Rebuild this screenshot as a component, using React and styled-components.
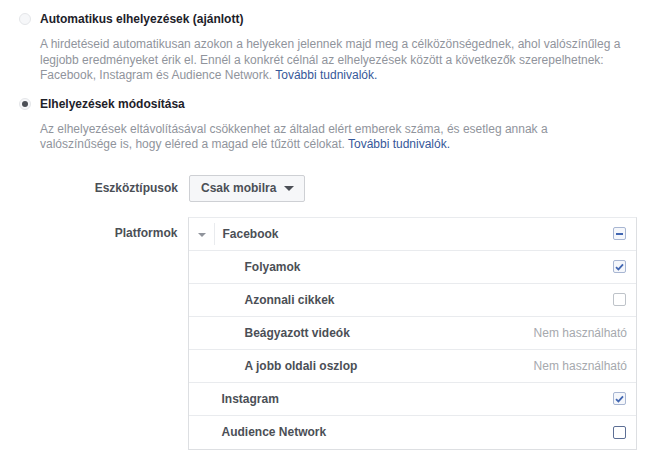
import styled, { createGlobalStyle } from 'styled-components'

const GlobalStyle = createGlobalStyle`
    body {
        margin: 0;
        background: #fff;
        font-family: "Liberation Sans", Arial, sans-serif;
        font-size: 12px;
        color: #1d2129;
    }
`

const App = () => {
    return (
        <Page>
            <GlobalStyle />

            <Option>
                <OptionHead>
                    <Radio />
                    <OptionTitle>Automatikus elhelyezések (ajánlott)</OptionTitle>
                </OptionHead>
                <Description>
                    A hirdetéseid automatikusan azokon a helyeken jelennek majd meg a célközönségednek, ahol valószínűleg a<br />
                    legjobb eredményeket érik el. Ennél a konkrét célnál az elhelyezések között a következők szerepelhetnek:<br />
                    Facebook, Instagram és Audience Network. <Link>További tudnivalók.</Link>
                </Description>
            </Option>

            <Option>
                <OptionHead>
                    <Radio checked />
                    <OptionTitle>Elhelyezések módosítása</OptionTitle>
                </OptionHead>
                <Description>
                    Az elhelyezések eltávolításával csökkenhet az általad elért emberek száma, és esetleg annak a<br />
                    valószínűsége is, hogy eléred a magad elé tűzött célokat. <Link>További tudnivalók.</Link>
                </Description>
            </Option>

            <FieldRow>
                <FieldLabel>Eszköztípusok</FieldLabel>
                <Dropdown>
                    Csak mobilra
                    <Caret />
                </Dropdown>
            </FieldRow>

            <FieldRow top>
                <FieldLabel tall>Platformok</FieldLabel>
                <Table>
                    <Row>
                        <Toggle>
                            <Caret light />
                        </Toggle>
                        <RowLabel>Facebook</RowLabel>
                        <Checkbox state="mixed" />
                    </Row>
                    <Row>
                        <RowLabel indent>Folyamok</RowLabel>
                        <Checkbox state="checked" />
                    </Row>
                    <Row>
                        <RowLabel indent>Azonnali cikkek</RowLabel>
                        <Checkbox />
                    </Row>
                    <Row>
                        <RowLabel indent>Beágyazott videók</RowLabel>
                        <Unavailable>Nem használható</Unavailable>
                    </Row>
                    <Row>
                        <RowLabel indent>A jobb oldali oszlop</RowLabel>
                        <Unavailable>Nem használható</Unavailable>
                    </Row>
                    <Row>
                        <RowLabel>Instagram</RowLabel>
                        <Checkbox state="checked" />
                    </Row>
                    <Row>
                        <RowLabel>Audience Network</RowLabel>
                        <Checkbox state="focus" />
                    </Row>
                </Table>
            </FieldRow>
        </Page>
    )
}

export default App

const Checkbox = ({ state }) => (
    <Box state={state}>
        {state === 'mixed' && <Dash />}
        {state === 'checked' && (
            <svg width="9" height="8" viewBox="0 0 9 8">
                <path d="M1 4.2 L3.4 6.4 L8 1.4" fill="none" stroke="#4267b2" strokeWidth="1.8" />
            </svg>
        )}
    </Box>
)

const Page = styled.div`
    padding: 11px 20px 0 19px;
`

const Option = styled.div`
    margin-bottom: 12px;
`

const OptionHead = styled.div`
    display: flex;
    align-items: center;
    height: 16px;
    gap: 9px;
`

const Radio = styled.span`
    box-sizing: border-box;
    width: 12px;
    height: 12px;
    border-radius: 50%;
    border: 1px solid #e4e6e9;
    background: #f6f7f9;
    display: flex;
    align-items: center;
    justify-content: center;

    &::after {
        content: '';
        display: ${p => (p.checked ? 'block' : 'none')};
        width: 6px;
        height: 6px;
        border-radius: 50%;
        background: #4b4f56;
    }
`

const OptionTitle = styled.span`
    font-weight: bold;
    font-size: 12px;
    color: #1d2129;
`

const Description = styled.p`
    margin: 10px 0 0 21px;
    color: #90949c;
    font-size: 12px;
    line-height: 15.5px;
    white-space: nowrap;
`

const Link = styled.span`
    color: #365899;
`

const FieldRow = styled.div`
    display: flex;
    align-items: ${p => (p.top ? 'flex-start' : 'center')};
    gap: 11px;
    margin-top: ${p => (p.top ? '15px' : '22px')};
`

const FieldLabel = styled.div`
    width: 159px;
    text-align: right;
    font-weight: bold;
    color: #4b4f56;
    line-height: ${p => (p.tall ? '33px' : '27px')};
`

const Dropdown = styled.button`
    box-sizing: border-box;
    height: 27px;
    width: 116px;
    padding: 0 10px 0 11px;
    display: flex;
    align-items: center;
    justify-content: space-between;
    border: 1px solid #ced0d4;
    border-radius: 2px;
    background: #f6f7f9;
    font-family: "Liberation Sans", Arial, sans-serif;
    font-size: 12px;
    font-weight: bold;
    color: #4b4f56;
`

const Caret = styled.span`
    width: 0;
    height: 0;
    border-left: ${p => (p.light ? '4px' : '5px')} solid transparent;
    border-right: ${p => (p.light ? '4px' : '5px')} solid transparent;
    border-top: ${p => (p.light ? '4px' : '5px')} solid ${p => (p.light ? '#90949c' : '#4b4f56')};
`

const Table = styled.div`
    width: 448px;
    border: 1px solid #dddfe2;
    border-top-color: #e9ebee;
`

const Row = styled.div`
    box-sizing: border-box;
    display: flex;
    align-items: center;
    height: 33px;
    padding-right: 9px;
    border-bottom: 1px solid #e9ebee;

    &:last-child {
        border-bottom: none;
    }
`

const Toggle = styled.div`
    width: 24px;
    height: 20px;
    margin-left: 1px;
    display: flex;
    align-items: center;
    justify-content: center;
    border-right: 1px solid #e9ebee;
    margin-right: 7px;
    padding-top: 2px;
`

const RowLabel = styled.div`
    flex: 1;
    font-weight: bold;
    color: #4b4f56;
    padding-left: ${p => (p.indent ? '55px' : '32px')};
    line-height: 16px;

    ${Toggle} + & {
        padding-left: 0;
    }
`

const Box = styled.span`
    box-sizing: border-box;
    width: 13px;
    height: 13px;
    margin-right: 1px;
    border-radius: 2px;
    display: flex;
    align-items: center;
    justify-content: center;
    background: ${p => (p.state === 'mixed' || p.state === 'checked' ? '#f5f7fb' : '#fff')};
    border: 1px solid ${p => {
        if (p.state === 'focus') return '#5d6f95'
        if (p.state === 'mixed' || p.state === 'checked') return '#a8b6d2'
        return '#bec3c9'
    }};
`

const Dash = styled.span`
    width: 7px;
    height: 2px;
    background: #4267b2;
`

const Unavailable = styled.div`
    color: #a6a9ae;
    font-size: 12px;
    margin-right: 0;
`
